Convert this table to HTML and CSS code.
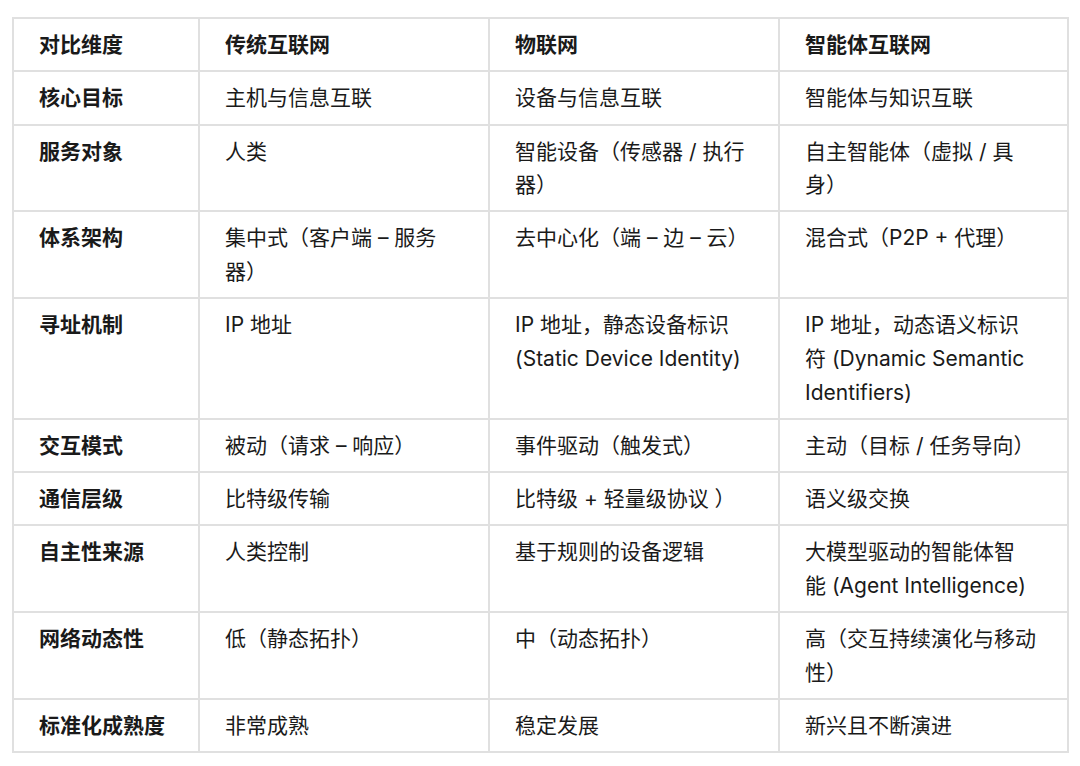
FILE: index.html
```html
<!DOCTYPE html>
<html lang="zh-CN">
<head>
<meta charset="utf-8">
<link rel="stylesheet" href="styles.css">
</head>
<body>
<table class="cmp">
  <colgroup>
    <col class="c1"><col class="c2"><col class="c3"><col class="c4">
  </colgroup>
  <thead>
    <tr><th>对比维度</th><th>传统互联网</th><th>物联网</th><th>智能体互联网</th></tr>
  </thead>
  <tbody>
    <tr><th>核心目标</th><td>主机与信息互联</td><td>设备与信息互联</td><td>智能体与知识互联</td></tr>
    <tr><th>服务对象</th><td>人类</td><td>智能设备（传感器 / 执行器）</td><td>自主智能体（虚拟 / 具身）</td></tr>
    <tr><th>体系架构</th><td>集中式（客户端 – 服务器）</td><td>去中心化（端 – 边 – 云）</td><td>混合式（P2P + 代理）</td></tr>
    <tr><th>寻址机制</th><td>IP 地址</td><td>IP 地址，静态设备标识 (Static Device Identity)</td><td>IP 地址，动态语义标识符&nbsp;(Dynamic Semantic Identifiers)</td></tr>
    <tr><th>交互模式</th><td>被动（请求 – 响应）</td><td>事件驱动（触发式）</td><td>主动（目标 / 任务导向）</td></tr>
    <tr><th>通信层级</th><td>比特级传输</td><td>比特级 + 轻量级协议 ）</td><td>语义级交换</td></tr>
    <tr><th>自主性来源</th><td>人类控制</td><td>基于规则的设备逻辑</td><td>大模型驱动的智能体智能&nbsp;(Agent Intelligence)</td></tr>
    <tr><th>网络动态性</th><td>低（静态拓扑）</td><td>中（动态拓扑）</td><td>高（交互持续演化与移动性）</td></tr>
    <tr><th>标准化成熟度</th><td>非常成熟</td><td>稳定发展</td><td>新兴且不断演进</td></tr>
  </tbody>
</table>
</body>
</html>
```

FILE: styles.css
```css
html, body {
  margin: 0;
  padding: 0;
  background: #ffffff;
}

body {
  padding: 17px 0 0 12px;
  font-family: "Inter", "Noto Sans CJK SC", "Noto Sans", sans-serif;
  color: #1a1a1a;
}

.cmp {
  border-collapse: separate;
  border-spacing: 0;
  table-layout: fixed;
  width: 1057px;
  border-top: 2px solid #e0e0e0;
  border-left: 2px solid #e0e0e0;
}

.c1 { width: 186px; }
.c2 { width: 290px; }
.c3 { width: 290px; }
.c4 { width: 289px; }

.cmp th,
.cmp td {
  border-right: 2px solid #e0e0e0;
  border-bottom: 2px solid #e0e0e0;
  padding: 9px 25px 8.7px 25px;
  font-size: 21px;
  line-height: 33.6px;
  text-align: left;
  vertical-align: top;
}

.cmp th {
  font-weight: 700;
}

.cmp td {
  font-weight: 400;
}
```
